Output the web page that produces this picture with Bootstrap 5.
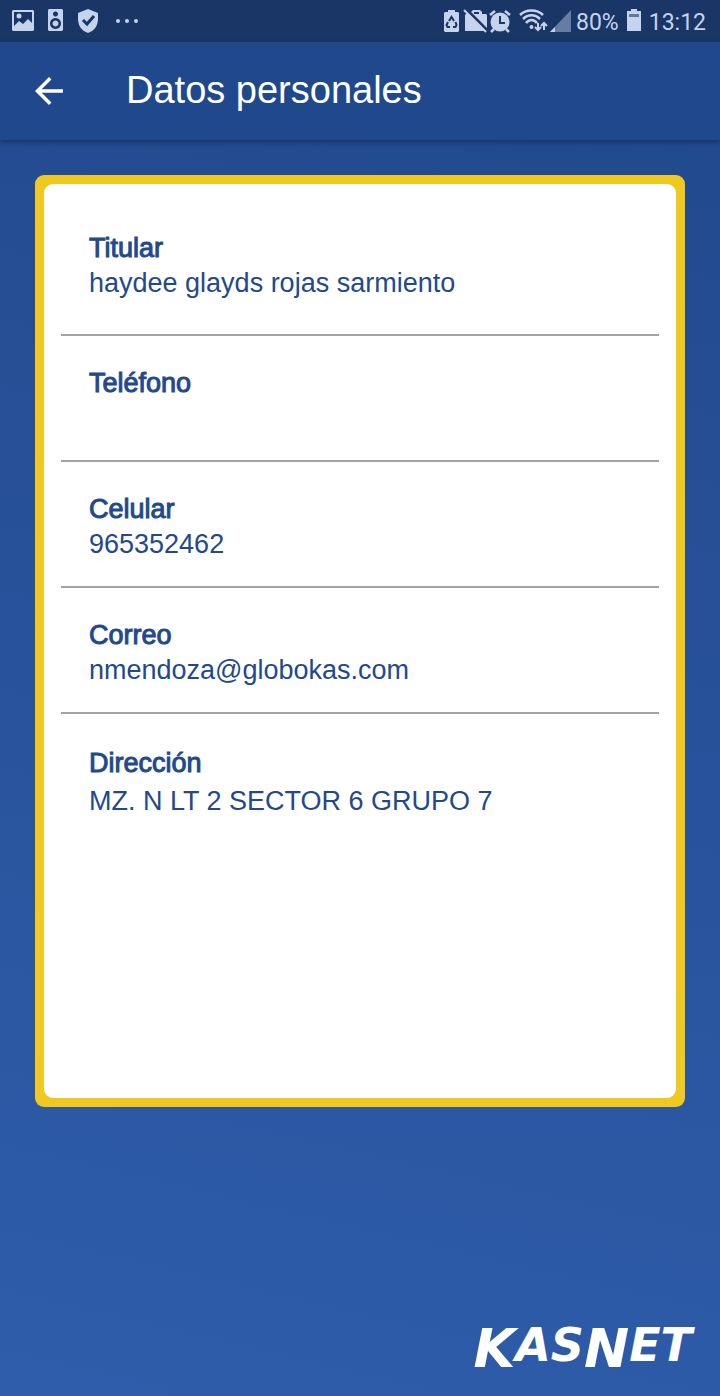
<!DOCTYPE html>
<html lang="es">
<head>
<meta charset="utf-8">
<meta name="viewport" content="width=device-width, initial-scale=1">
<title>Datos personales</title>
<link href="https://cdn.jsdelivr.net/npm/bootstrap@5.3.0/dist/css/bootstrap.min.css" rel="stylesheet">
<style>
  body { font-family: "Liberation Sans", Arial, sans-serif; background: linear-gradient(193deg, #21488c 0%, #2a559f 65%, #2f5dab 100%); color: #23498c; }
  .status-bar { height: 42px; background: #1a3667; color: #c6d3ec; font: 23px/42px Roboto, sans-serif; padding: 0 14px 0 12px; }
  .status-bar svg { display: block; flex: none; }
  .status-bar span { padding-top: 3px; }
  .notices { gap: 14px; }
  .app-bar { height: 98px; background: #20488d; color: #fff; box-shadow: 0 2px 6px rgba(0, 10, 40, .4); padding-left: 28px; gap: 54px; }
  .app-bar h1 { font-size: 38px; line-height: 44px; padding: 0 0 2px 2px; }
  .back-btn { color: #fff; width: 42px; height: 42px; }
  .back-btn:hover { color: #fff; }
  .frame { margin: 35px 35px 0; padding: 9px; background: #efc91f; border-radius: 9px; }
  .sheet { border-radius: 9px; padding: 0 17px; background: #fff; font-size: 27px; line-height: 35px; }
  .field { padding: 30px 28px 24px; border-bottom: 2px solid #a3a3a3; }
  .field:first-child { padding-top: 47px; padding-bottom: 33px; }
  .field:last-child { border: 0; line-height: 38px; }
  .field dt { font-weight: 400; -webkit-text-stroke: 1px currentColor; }
  .field dd { min-height: 35px; }
  .brand-foot { height: 289px; padding: 0 28px 20px; }
  .brand { font-family: "DejaVu Sans", sans-serif; font-weight: 700; font-style: italic; font-size: 46px; line-height: 1; color: #fff; }
  .brand big { font-size: 54px; line-height: 1; }
</style>
</head>
<body class="d-flex flex-column min-vh-100">
<div class="status-bar d-flex align-items-center justify-content-between">
  <div class="notices d-flex align-items-center">
    <svg width="22" height="24" viewBox="0 0 22 24" fill="currentColor" aria-hidden="true"><path fill-rule="evenodd" d="M1 1h20l1 1v19l-1 1H1l-1-1V2zm1 2v14l5-5 4 3 5-5 4 4V3z"/><circle cx="7" cy="7" r="2.500"/></svg>
    <svg width="15" height="24" viewBox="0 0 15 24" fill="currentColor" aria-hidden="true"><path fill-rule="evenodd" d="M1 0h13l1 1v20l-1 1H1l-1-1V1zM7.500 2.500a2.500 2.500 0 1 0 .01 0zM7.500 9a5.500 5.500 0 1 0 .01 0z"/><path d="M7.500 11.500a3 3 0 1 1-.01 0z"/></svg>
    <svg width="22" height="24" viewBox="0 0 22 24" fill="currentColor" aria-hidden="true"><path d="M11 0 21 4v6c0 7-4 12-10 14C5 22 1 17 1 10V4z"/><path d="m6 11 4 4 7-8" fill="none" stroke="#1a3667" stroke-width="3"/></svg>
    <svg width="28" height="24" viewBox="0 0 28 24" fill="currentColor" aria-hidden="true"><circle cx="5" cy="12" r="2"/><circle cx="14" cy="12" r="2"/><circle cx="23" cy="12" r="2"/></svg>
  </div>
  <div class="d-flex align-items-center">
    <svg width="15" height="24" viewBox="0 0 15 24" fill="currentColor" aria-hidden="true"><path d="M4 1h7v2h3l1 1v18l-1 1H1l-1-1V4l1-1h3z"/><path d="m5 12 2.500-4 2.500 4M11.500 13l1 3-1 2H9M6 18H3.500l-1-2 1.500-3" fill="none" stroke="#1a3667" stroke-width="2"/></svg>
    <svg class="ms-1" width="26" height="24" viewBox="0 0 26 24" fill="currentColor" aria-hidden="true"><path fill-rule="evenodd" d="M3 5h5V3l2-2h7l2 2v2h4l1 1v16H2V6zm8-2v2h5V3z"/><path d="m3 0 22 22" stroke="#1a3667" stroke-width="3"/><path d="m1 1 22 22" stroke="currentColor" stroke-width="2"/></svg>
    <svg width="22" height="24" viewBox="0 0 22 24" fill="currentColor" aria-hidden="true"><circle cx="11" cy="13" r="9.500"/><path d="m1 6 5-4M21 6l-5-4M5 20l-3 3M17 20l3 3" stroke="currentColor" stroke-width="2.500"/><path d="M11 7v7h5" fill="none" stroke="#1a3667" stroke-width="2"/></svg>
    <svg class="ms-2" width="29" height="24" viewBox="0 0 29 24" fill="none" stroke="currentColor" stroke-width="2.500" aria-hidden="true"><path d="M1 6c6-6 17-6 23 0M4 10c5-5 12-5 17 0M7 14c3-4 8-4 11 0"/><circle cx="12.500" cy="18" r="2" fill="currentColor" stroke="none"/><path stroke-width="2" d="M19 14v7m-3-3 3 3 3-3M25 21v-7m-3 3 3-3 3 3"/></svg>
    <svg width="24" height="24" viewBox="0 0 24 24" fill="currentColor" aria-hidden="true"><path d="M23 1v22H2z" opacity=".45"/><path d="M7 18v5H2z"/></svg>
    <span class="ms-1">80%</span>
    <svg class="ms-2" width="14" height="24" viewBox="0 0 14 24" fill="currentColor" aria-hidden="true"><path d="M4 0h6v2h4v20H0V2h4z"/><path d="M2 5h10v3H2z" fill="#62779e"/></svg>
    <span class="ms-2">13:12</span>
  </div>
</div>
<header class="app-bar d-flex align-items-center">
  <button type="button" class="back-btn btn p-0 border-0" aria-label="Volver">
    <svg class="d-block" width="42" height="42" viewBox="0 0 24 24" fill="currentColor"><path d="M20 11H7.830l5.590-5.590L12 4l-8 8 8 8 1.410-1.410L7.830 13H20z"/></svg>
  </button>
  <h1 class="m-0 fw-normal">Datos personales</h1>
</header>
<main class="frame flex-grow-1 d-flex flex-column">
  <dl class="sheet flex-grow-1 m-0">
    <div class="field"><dt>Titular</dt><dd class="m-0">haydee glayds rojas sarmiento</dd></div>
    <div class="field"><dt>Teléfono</dt><dd class="m-0"></dd></div>
    <div class="field"><dt>Celular</dt><dd class="m-0">965352462</dd></div>
    <div class="field"><dt>Correo</dt><dd class="m-0">nmendoza@globokas.com</dd></div>
    <div class="field"><dt>Dirección</dt><dd class="m-0">MZ. N LT 2 SECTOR 6 GRUPO 7</dd></div>
  </dl>
</main>
<footer class="brand-foot d-flex align-items-end justify-content-end">
  <div class="brand d-flex align-items-start"><big>K</big>AS<big>N</big>ET</div>
</footer>
<script src="https://cdn.jsdelivr.net/npm/bootstrap@5.3.0/dist/js/bootstrap.bundle.min.js"></script>
</body>
</html>
